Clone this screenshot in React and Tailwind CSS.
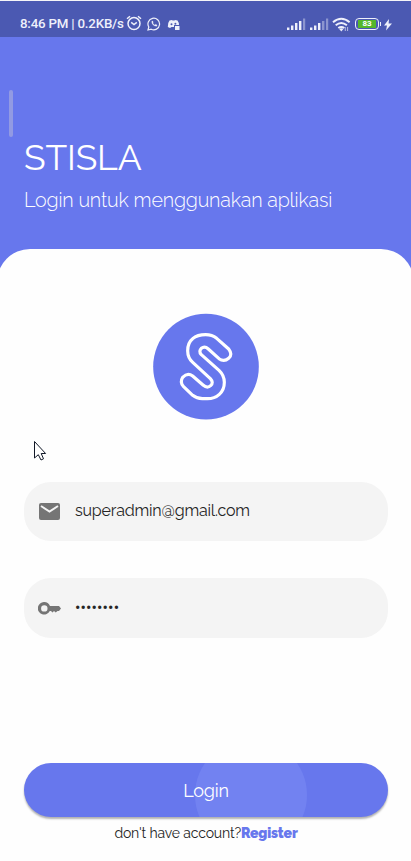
import React from "react";

const Signal = ({ strong }) => (
  <svg width="19" height="13" viewBox="0 0 19 13" fill="#eef0fb">
    <rect x="0" y="9.5" width="2.4" height="2.5" />
    <rect x="4" y="7.5" width="2.4" height="4.5" />
    <rect x="8" y="5" width="2.4" height="7" />
    <rect x="12" y="3" width="2.4" height="9" opacity={strong ? 1 : 0.4} />
    <rect x="16" y="0.5" width="2.2" height="11.5" opacity="0.4" />
  </svg>
);

function StatusBar() {
  return (
    <div className="flex h-[37px] items-start border-t border-[#f5f5f8] bg-[#4b59b2] pl-5 text-[#eef0fb]">
      <span className="mt-[13px] w-[104px] whitespace-nowrap font-[Roboto,sans-serif] text-[13.3px] font-medium leading-5 tracking-[-0.2px]">
        8:46 PM | 0.2KB/s
      </span>
      <svg className="ml-[2px] mt-[14px]" width="16" height="16" viewBox="0 0 16 16" fill="none" stroke="#eef0fb" strokeWidth="1.5">
        <circle cx="8" cy="8.6" r="6" />
        <path d="M1 3.8L4 1.2M15 3.8L12 1.2M5.2 7.4L8 9.6L10.8 7.4" />
      </svg>
      <svg className="ml-[5px] mt-4" width="14" height="14" viewBox="0 0 14 14" fill="none" stroke="#eef0fb" strokeWidth="1.2">
        <path d="M1 13L1.8 10A5.8 5.8 0 1 1 4.2 12.2Z" />
        <path d="M4.9 4.1C4 6.5 7 9.7 9.7 9.3L10.1 8L8.6 7.3L7.8 8C6.9 7.6 6.2 6.9 5.8 6L6.3 5.3L5.7 3.9Z" fill="#eef0fb" strokeWidth="0.2" />
      </svg>
      <svg className="ml-[6px] mt-[18px]" width="14" height="12" viewBox="0 0 14 12" fill="#eef0fb">
        <path fillRule="evenodd" d="M2.5 1.5L5 1L5.5 1.5H7.5L8 1L10.5 1.5Q12 3.5 12 6H7V8H4.5L3 9L0.8 8Q0.5 4 2.5 1.5ZM4.5 4.2A1 1 0 1 0 4.5 6.2A1 1 0 1 0 4.5 4.2ZM8.4 3.8A1 1 0 1 0 8.4 5.8A1 1 0 1 0 8.4 3.8Z" />
        <path d="M8 7H12.5V11H8Z" />
      </svg>
      <div className="ml-auto flex pr-[19px]">
        <div className="mt-[17px] flex gap-1"><Signal strong /><Signal /></div>
        <svg className="ml-[3px] mt-4" width="19" height="16" viewBox="0 0 19 16" fill="none" stroke="#eef0fb" strokeWidth="2">
          <path d="M1 5.2Q9.3-1.8 17.6 5.2M3.7 8.3Q9.3 3.8 14.9 8.3M6.3 11Q9.3 8.8 12.3 11" />
          <path d="M7.2 12Q9.3 10.6 11.4 12L9.3 14.5Z" fill="#eef0fb" stroke="none" />
          <path d="M13.3 14V10M15.6 10V14" strokeWidth="1" opacity=".65" />
        </svg>
        <div className="ml-1 mt-[17px] flex h-3 w-6 items-center justify-center rounded-[4px] border-[1.5px] border-[#eef0fb]">
          <div className="flex h-[8px] w-[18px] shrink-0 items-center justify-center bg-[#54b72b] font-[Roboto,sans-serif] text-[8px] font-bold leading-none text-white">83</div>
        </div>
        <div className="ml-px mt-[21px] h-1 w-px bg-[#eef0fb]" />
        <svg className="ml-[3px] mt-[18px]" width="8" height="12" viewBox="0 0 8 12" fill="#eef0fb"><path d="M5 0L0 6.5H3L2 11.5L8 4.5H4.6Z" /></svg>
      </div>
    </div>
  );
}

export default function App() {
  return (
    <main className="relative flex h-[861px] w-[411px] flex-col overflow-hidden bg-[#6777ed] font-[Raleway,Lato,sans-serif]">
      <StatusBar />
      <header className="h-[212px] shrink-0 pl-6 text-white">
        <h1 className="mt-[98px] whitespace-nowrap text-[35.5px] font-[450] leading-[46px] tracking-[-0.1px]">STISLA</h1>
        <p className="mt-[7px] whitespace-nowrap text-[19.7px] font-light leading-6 tracking-[-0.15px]">Login untuk menggunakan aplikasi</p>
      </header>
      <div className="absolute left-[8.5px] top-[90px] h-[47px] w-1 rounded-full bg-[#929ae3]" />

      <section className="-mx-[3px] flex grow flex-col rounded-t-[33px] bg-[#fefefe] pl-[27px] pr-[26px]">
        <svg className="ml-[116px] mt-[51px] shrink-0" width="130" height="130" viewBox="0 0 390 390">
          <circle cx="198" cy="200" r="158.5" fill="#6777ed" />
          <path d="M197 104Q216 104 230 115L266 147Q279 164 266 175Q252 187 237 176L205 147Q194 137 184 145Q175 154 184 164L237 211Q253 226 253 247Q253 270 238 283Q224 296 202 296H187Q170 296 158 286L130 259Q119 246 128 232Q143 216 158 228L189 255Q202 266 212 257Q222 248 211 236L159 188Q143 174 143 152Q143 128 158 116Q172 104 197 104Z" fill="none" stroke="#fff" strokeWidth="9.5" strokeLinejoin="round" />
        </svg>
        <div className="mt-[52px] flex h-[59px] shrink-0 items-center rounded-[27px] bg-[#f4f4f4] pl-[15px]">
          <svg width="21" height="17" viewBox="0 0 21 17"><rect width="21" height="17" rx="2" fill="#757575" /><path d="M2 3L10.5 8.6L19 3" fill="none" stroke="#f4f4f4" strokeWidth="2" /></svg>
          <span className="relative -top-px ml-[15px] whitespace-nowrap text-[16px] font-[450] leading-6 tracking-[-0.18px] text-[#252525]">superadmin@gmail.com</span>
        </div>
        <div className="mt-[37px] flex h-[60px] shrink-0 items-center rounded-[27px] bg-[#f4f4f4] pl-[14px]">
          <svg width="23" height="13" viewBox="0 0 23 13" fill="#757575"><path fillRule="evenodd" d="M6.3 0A6.3 6.3 0 1 0 11.8 9H13L14.5 10.5L16 9L17.7 10.5L19.5 9H21L23 6.5L21 4H12Q10.3 0 6.3 0ZM6.3 3.2A3.2 3.2 0 1 1 6.3 9.6A3.2 3.2 0 1 1 6.3 3.2Z" /></svg>
          <span className="ml-[14px] whitespace-nowrap font-['Roboto'] text-[16px] leading-6 tracking-[0.12px] text-[#252525]">••••••••</span>
        </div>
        <button className="relative mt-[125px] h-[54px] shrink-0 overflow-visible rounded-full bg-[#6777ed] text-[18px] font-[450] leading-[54px] tracking-[-0.2px] text-white shadow-[0_2px_2px_rgba(0,0,0,0.3)]">
          <span className="absolute inset-0 overflow-hidden rounded-full"><span className="absolute left-[171px] top-[-24px] h-[112px] w-[112px] rounded-full bg-[#7282f1]" /></span>
          <span className="relative top-px">Login</span>
        </button>
        <p className="mt-[6px] flex justify-center whitespace-nowrap text-[14px] font-[450] leading-5 tracking-[-0.16px] text-[#252525]">
          <span>don't have account?</span><a className="font-black text-[#6777ed]">Register</a>
        </p>
      </section>
      <svg className="absolute left-[33px] top-[440px]" width="15" height="22" viewBox="0 0 15 22"><path d="M1.5 1.5V18L5.3 14.7L8 20L10.5 18.8L8.2 13.5H12.6Z" fill="#fff" stroke="#111827" /></svg>
    </main>
  );
}
